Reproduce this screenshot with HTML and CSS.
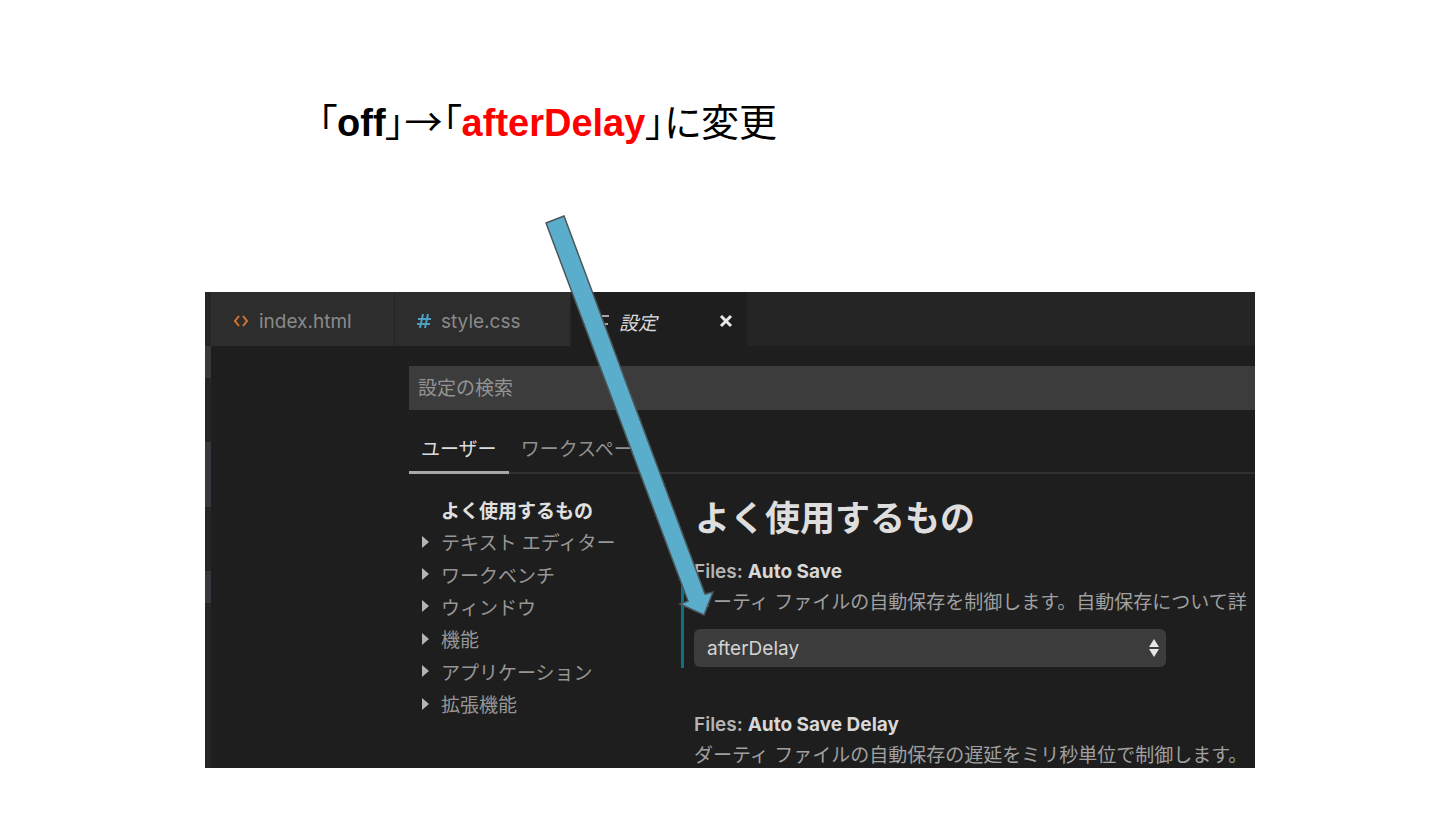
FILE: index.html
```html
<!DOCTYPE html>
<html lang="ja">
  <head>
    <meta charset="utf-8">
    <title>Auto Save</title>
    <link rel="stylesheet" href="styles.css">
  </head>
  <body>
    <h1 class="caption">「<b>off</b>」<span class="to">→</span>「<b class="red">afterDelay</b>」に変更</h1>

    <div class="figure">
      <div class="window">
        <div class="sidebar">
          <span class="mark mark-top"></span>
          <span class="mark mark-middle"></span>
          <span class="mark mark-bottom"></span>
        </div>

        <div class="editor">
          <div class="file-tabs">
            <button class="file-tab">
              <svg width="16" height="14" viewBox="0 0 16 14" fill="none" stroke="#d9752f" stroke-width="2">
                <path d="M6 2L2 7l4 5M10 2l4 5-4 5"/>
              </svg>
              index.html
            </button>
            <button class="file-tab">
              <svg width="14" height="14" viewBox="0 0 14 14" fill="none" stroke="#4d9fc0" stroke-width="2">
                <path d="M6 0L3 14M11 0L8 14M1 5h13M0 10h13"/>
              </svg>
              style.css
            </button>
            <button class="file-tab active">
              <svg width="16" height="14" viewBox="0 0 16 14" fill="none" stroke="#a8a8a8" stroke-width="2">
                <path d="M2 2h14M2 10h13"/>
              </svg>
              設定
              <svg class="close" width="14" height="14" viewBox="0 0 14 14" stroke="#e8e8e8" stroke-width="3">
                <path d="M2 2l10 10M12 2L2 12"/>
              </svg>
            </button>
          </div>

          <div class="settings">
            <input class="search" type="text" placeholder="設定の検索" aria-label="設定の検索">

            <div class="scopes">
              <button class="scope active">ユーザー</button>
              <button class="scope">ワークスペース</button>
            </div>

            <div class="columns">
              <ul class="toc">
                <li class="current">よく使用するもの</li>
                <li>テキスト エディター</li>
                <li>ワークベンチ</li>
                <li>ウィンドウ</li>
                <li>機能</li>
                <li>アプリケーション</li>
                <li>拡張機能</li>
              </ul>

              <div class="list">
                <h2>よく使用するもの</h2>

                <div class="setting modified">
                  <label for="auto-save">Files: <b>Auto Save</b></label>
                  <p>ダーティ ファイルの自動保存を制御します。自動保存について詳</p>
                  <div class="dropdown">
                    <select id="auto-save">
                      <option>afterDelay</option>
                    </select>
                    <svg width="10" height="18" viewBox="0 0 10 18" fill="#e6e6e6">
                      <path d="M5 0l5 8H0zM5 18l5-8H0z"/>
                    </svg>
                  </div>
                </div>

                <div class="setting">
                  <h3>Files: <b>Auto Save Delay</b></h3>
                  <p>ダーティ ファイルの自動保存の遅延をミリ秒単位で制御します。</p>
                </div>
              </div>
            </div>
          </div>
        </div>
      </div>

      <svg class="arrow" width="180" height="410" viewBox="0 0 180 410">
        <path d="M6 13L24 6L165 384L173 382L164 405L140 394L148 391Z" fill="#5aaecb" stroke="#4c565b" stroke-width="1.5"/>
      </svg>
    </div>
  </body>
</html>
```

FILE: styles.css
```css
* {
  box-sizing: border-box;
}

body {
  margin: 0;
  background: #fff;
  font-family: Inter, "Noto Sans CJK JP", sans-serif;
  font-size: 19px;
}

button, input, select {
  border: 0;
  border-radius: 0;
  background: none;
  font: inherit;
}

h1, h2, h3, p, ul {
  margin: 0;
  padding: 0;
}

.caption {
  padding: 95px 0 0 318px;
  font-family: "Liberation Sans", "Noto Sans CJK JP", sans-serif;
  font-size: 38px;
  font-weight: normal;
  font-feature-settings: "palt";
  line-height: 56px;
  color: #000;
}

.to {
  font-family: "Noto Sans CJK JP", sans-serif;
  line-height: 1;
}

.red {
  color: #f00;
}

.figure {
  position: relative;
  margin: 141px 185px 56px 205px;
}

.window {
  display: flex;
  overflow: hidden;
  background: #1e1e1e;
  color: #a0a0a0;
}

/* slice of the explorer left of the editor */
.sidebar {
  flex: none;
  width: 6px;
  padding-top: 54px;
  background: #252526;
}

.mark {
  display: block;
  height: 32px;
  background: #37373d;
}

.mark-top {
  background: #383838;
}

.mark-middle {
  height: 65px;
  margin: 64px 0;
}

.editor {
  flex: 1;
  min-width: 0;
}

.file-tabs {
  display: flex;
  height: 54px;
  background: #252526;
}

.file-tab {
  display: flex;
  align-items: center;
  gap: 10px;
  width: 184px;
  padding: 4px 14px 0 22px;
  border-right: 1px solid #252526;
  background: #2d2d2d;
  color: #8a8a8a;
}

.file-tab + .file-tab {
  width: 176px;
}

.file-tab.active {
  border: 0;
  background: #1e1e1e;
  color: #dcdcdc;
  font-style: italic;
}

.close {
  margin-left: auto;
}

.settings {
  padding: 20px 0 0 198px;
}

.search {
  display: block;
  width: 100%;
  height: 44px;
  padding: 0 9px;
  background: #3c3c3c;
  color: #ccc;
}

.search::placeholder {
  color: #949494;
  opacity: 1;
}

.scopes {
  display: flex;
  height: 64px;
  padding-top: 16px;
  border-bottom: 2px solid #303030;
}

.scope {
  height: 48px;
  margin-bottom: -2px;
  padding: 0 12px 2px;
  border-bottom: 3px solid transparent;
  color: #909090;
}

.scope.active {
  border-color: #a8a8a8;
  color: #dcdcdc;
}

.columns {
  display: flex;
  padding-top: 19px;
}

.toc {
  display: grid;
  grid-template-rows: repeat(7, 1fr);
  flex: none;
  width: 272px;
  height: 227px;
  list-style: none;
}

.toc li {
  display: flex;
  align-items: center;
  gap: 12px;
  padding-left: 13px;
  color: #969696;
}

.toc li::before {
  content: "";
  border: solid transparent;
  border-width: 6px 0 6px 7px;
  border-left-color: #b4b4b4;
}

.toc .current {
  color: #e0e0e0;
  font-weight: bold;
}

.toc .current::before {
  border-color: transparent;
}

.list {
  flex: 1;
  min-width: 0;
}

.list h2 {
  padding-left: 14px;
  font-size: 35px;
  font-weight: bold;
  line-height: 50px;
  color: #dedede;
}

.setting {
  height: 109px;
  margin-top: 16px;
  padding-left: 10px;
  border-left: 3px solid transparent;
}

.setting + .setting {
  height: 56px;
  margin-top: 44px;
}

.modified {
  border-color: #0d7186;
}

.setting label, .setting h3 {
  display: block;
  font-size: 19px;
  font-weight: 600;
  line-height: 26px;
  color: #b4b4b4;
}

.setting b {
  font-weight: 700;
  color: #d8d8d8;
}

.setting p {
  overflow: hidden;
  line-height: 36px;
  white-space: nowrap;
}

.dropdown {
  position: relative;
  max-width: 472px;
  margin-top: 8px;
}

.dropdown select {
  width: 100%;
  height: 38px;
  padding: 0 13px;
  border-radius: 6px;
  background: #3c3c3c;
  color: #d4d4d4;
  appearance: none;
}

.dropdown svg {
  position: absolute;
  top: 10px;
  right: 7px;
}

/* callout drawn over the window */
.arrow {
  position: absolute;
  top: -82px;
  left: 335px;
}
```
